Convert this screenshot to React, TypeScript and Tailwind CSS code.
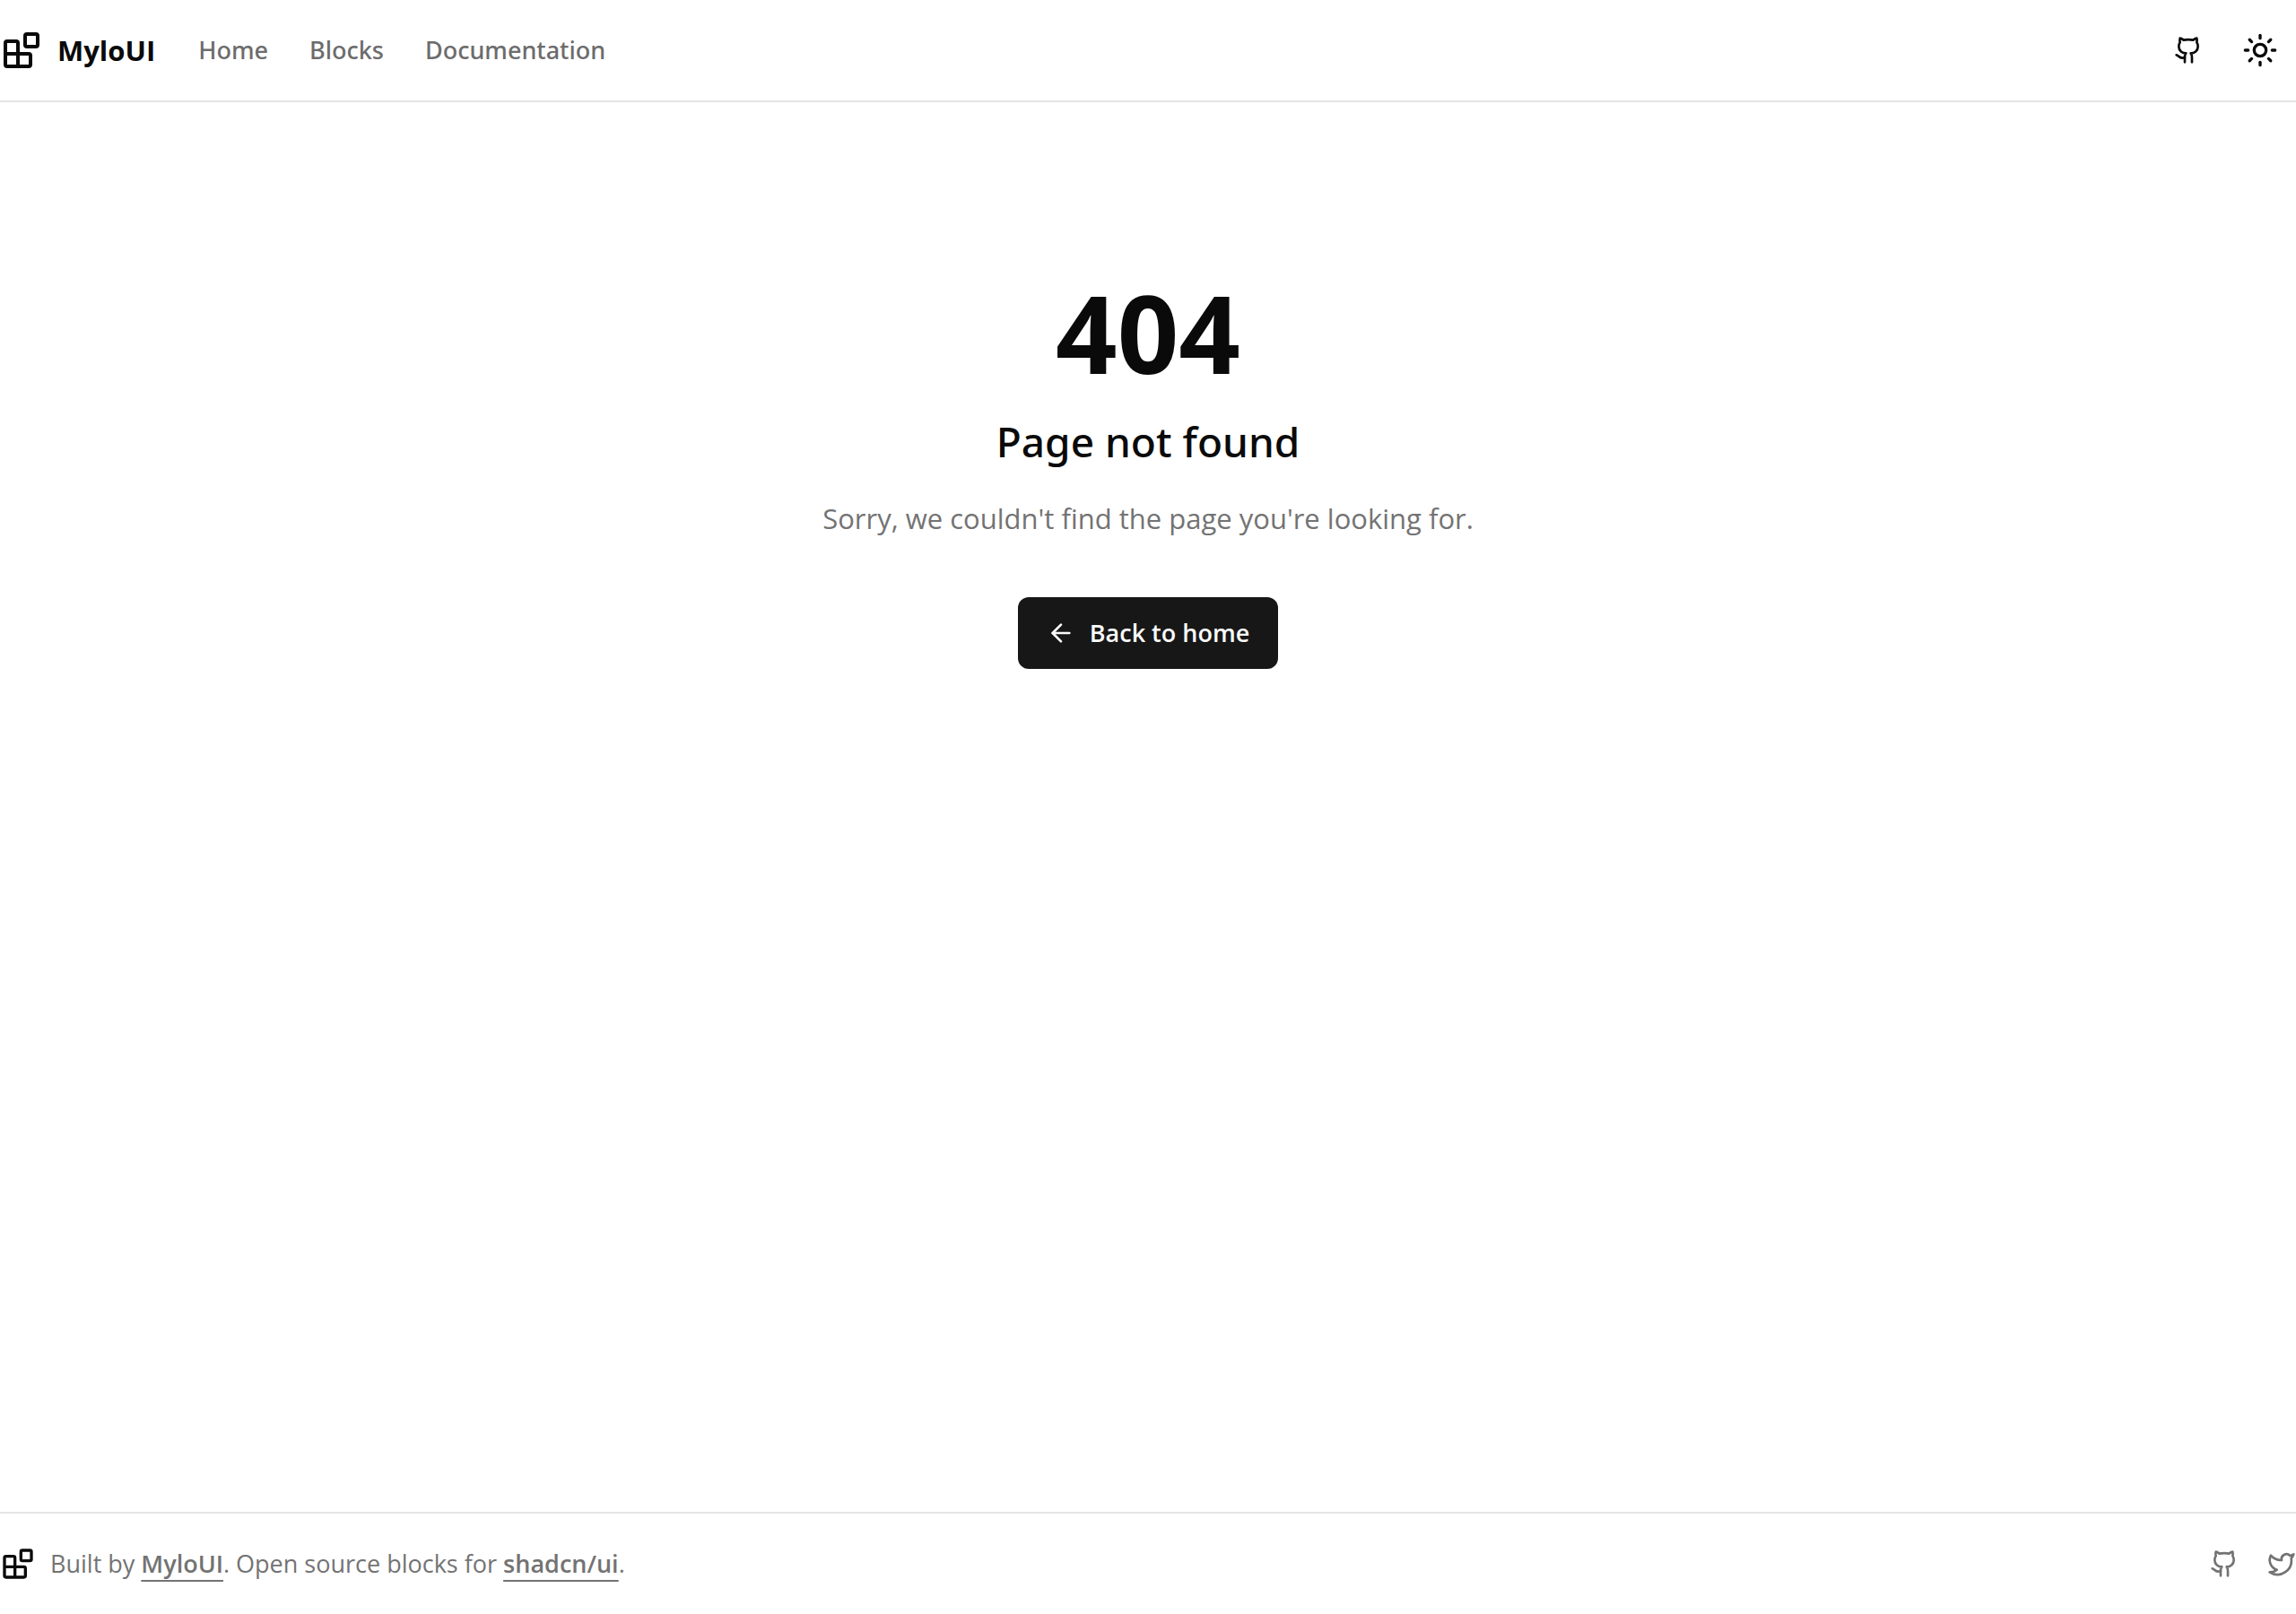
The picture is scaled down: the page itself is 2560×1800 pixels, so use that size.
import React from "react";
import { ArrowLeft, Github, Sun, Twitter } from "lucide-react";

const navItems = [
    { label: "Home", href: "#home" },
    { label: "Blocks", href: "#blocks" },
    { label: "Documentation", href: "#docs" },
];

function BlocksLogo({ className }: { className?: string }) {
    return (
        <svg
            viewBox="0 0 24 24"
            fill="none"
            stroke="currentColor"
            strokeWidth="2"
            strokeLinecap="round"
            strokeLinejoin="round"
            className={className}
            aria-hidden="true"
        >
            <rect width="7" height="7" x="14" y="3" rx="1" />
            <path d="M10 21V8a1 1 0 0 0-1-1H4a1 1 0 0 0-1 1v12a1 1 0 0 0 1 1h12a1 1 0 0 0 1-1v-5a1 1 0 0 0-1-1H3" />
        </svg>
    );
}

function SiteHeader() {
    return (
        <header className="border-b-2 border-[#e5e5e5]">
            <div className="flex h-28 items-center justify-between">
                <div className="flex items-center gap-12">
                    <a href="#home" className="flex items-center gap-4">
                        <BlocksLogo className="size-12" />
                        <span className="text-[31px] leading-10 font-bold">MyloUI</span>
                    </a>
                    <nav className="flex items-center gap-[46px] font-['Noto_Sans',sans-serif] text-[27px] leading-10 font-medium text-[#6c6c6c]">
                        {navItems.map((item) => (
                            <a key={item.label} href={item.href}>
                                {item.label}
                            </a>
                        ))}
                    </nav>
                </div>
                <div className="flex items-center">
                    <a href="#github" aria-label="GitHub" className="flex size-20 items-center justify-center">
                        <Github className="size-8" />
                    </a>
                    <button type="button" aria-label="Toggle theme" className="flex size-20 items-center justify-center">
                        <Sun className="size-10" />
                    </button>
                </div>
            </div>
        </header>
    );
}

function NotFound() {
    return (
        <main className="flex flex-1 flex-col items-center pt-48 text-center">
            <h1 className="text-[120px] leading-[130px] font-bold">404</h1>
            <h2 className="mt-6 font-['Noto_Sans',sans-serif] text-[46px] leading-[64px] font-medium">
                Page not found
            </h2>
            <p className="mt-[30px] text-[31px] leading-[48px] text-[#737373]">
                Sorry, we couldn't find the page you're looking for.
            </p>
            <a
                href="#home"
                className="mt-16 flex h-20 items-center gap-4 rounded-xl bg-[#171717] px-8 text-[27px] leading-10 font-semibold text-[#fafafa]"
            >
                <ArrowLeft className="size-8" />
                Back to home
            </a>
        </main>
    );
}

function SiteFooter() {
    return (
        <footer className="border-t-2 border-[#e5e5e5]">
            <div className="flex h-28 items-center justify-between">
                <div className="flex items-center gap-4">
                    <BlocksLogo className="size-10" />
                    <p className="text-[27px] leading-10 text-[#737373]">
                        Built by{" "}
                        <a href="#myloui" className="font-semibold underline decoration-2 underline-offset-8">
                            MyloUI
                        </a>
                        . Open source blocks for{" "}
                        <a href="#shadcn" className="font-semibold underline decoration-2 underline-offset-8">
                            shadcn/ui
                        </a>
                        .
                    </p>
                </div>
                <div className="flex items-center gap-8 text-[#737373]">
                    <a href="#github" aria-label="GitHub">
                        <Github className="size-8" />
                    </a>
                    <a href="#twitter" aria-label="Twitter">
                        <Twitter className="size-8" />
                    </a>
                </div>
            </div>
        </footer>
    );
}

export default function App() {
    return (
        <div className="flex min-h-screen flex-col bg-white font-['Open_Sans','Noto_Sans',sans-serif] text-[#0a0a0a]">
            <SiteHeader />
            <NotFound />
            <SiteFooter />
        </div>
    );
}
